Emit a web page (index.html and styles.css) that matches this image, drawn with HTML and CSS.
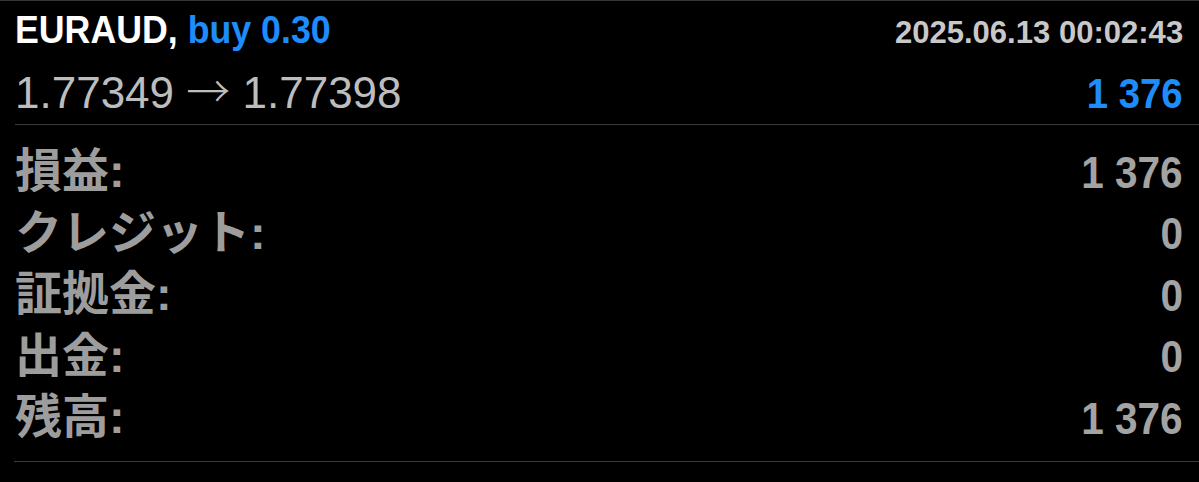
FILE: index.html
```html
<!DOCTYPE html>
<html lang="ja">
<head>
    <meta charset="UTF-8">
    <meta name="viewport" content="width=device-width, initial-scale=1.0">
    <title>EURAUD buy 0.30</title>
    <link rel="stylesheet" href="styles.css">
</head>
<body>

    <div class="trade">
        <div class="head">
            <div class="head-row">
                <div class="title">EURAUD, <span class="side">buy 0.30</span></div>
                <div class="time">2025.06.13 00:02:43</div>
            </div>
            <div class="head-row">
                <div class="prices">1.77349 <span class="arrow">→</span> 1.77398</div>
                <div class="profit">1 376</div>
            </div>
        </div>

        <ul class="details">
            <li class="detail">
                <span class="label">損益:</span>
                <span class="value">1 376</span>
            </li>
            <li class="detail">
                <span class="label">クレジット:</span>
                <span class="value">0</span>
            </li>
            <li class="detail">
                <span class="label">証拠金:</span>
                <span class="value">0</span>
            </li>
            <li class="detail">
                <span class="label">出金:</span>
                <span class="value">0</span>
            </li>
            <li class="detail">
                <span class="label">残高:</span>
                <span class="value">1 376</span>
            </li>
        </ul>
    </div>

</body>
</html>
```

FILE: styles.css
```css
body {
    margin: 0;
    background-color: #000;
    font-family: "Liberation Sans", "Noto Sans CJK JP", sans-serif;
}
.trade {
    border-top: 1px solid #363636;
}
.head {
    margin-left: 15px;
    padding: 10px 16px 9px 0;
    border-bottom: 1px solid #3a3a3a;
    display: flex;
    flex-direction: column;
    gap: 22px;
}
.head-row {
    display: flex;
    justify-content: space-between;
    align-items: baseline;
    line-height: 1;
}
/* the app font is a little narrower than Arial */
.title {
    font-size: 38px;
    font-weight: bold;
    color: #fff;
    white-space: nowrap;
    transform: scaleX(0.94);
    transform-origin: left center;
}
.side {
    color: #1e8cfa;
}
.time {
    font-size: 32px;
    font-weight: bold;
    color: #c8c8c8;
    white-space: nowrap;
    transform: scaleX(0.97);
    transform-origin: right center;
}
.prices {
    font-size: 44px;
    color: #bdbdbd;
}
.arrow {
    font-family: "Noto Sans CJK JP", sans-serif;
    font-weight: 300;
    line-height: 0;
}
.profit {
    font-size: 43px;
    font-weight: bold;
    color: #1e8cfa;
    transform: scaleX(0.89);
    transform-origin: right center;
}
.details {
    list-style: none;
    margin: 0 0 0 14px;
    padding: 15px 16px 13px 1px;
    border-bottom: 1px solid #3a3a3a;
}
.detail {
    height: 61.5px;
    display: flex;
    justify-content: space-between;
    align-items: center;
    line-height: 1;
}
.label {
    font-size: 47px;
    font-weight: bold;
    color: #9d9d9d;
}
.value {
    font-size: 45px;
    font-weight: bold;
    padding-top: 3px;
    color: #a3a3a3;
    transform: scaleX(0.9);
    transform-origin: right center;
}
```
